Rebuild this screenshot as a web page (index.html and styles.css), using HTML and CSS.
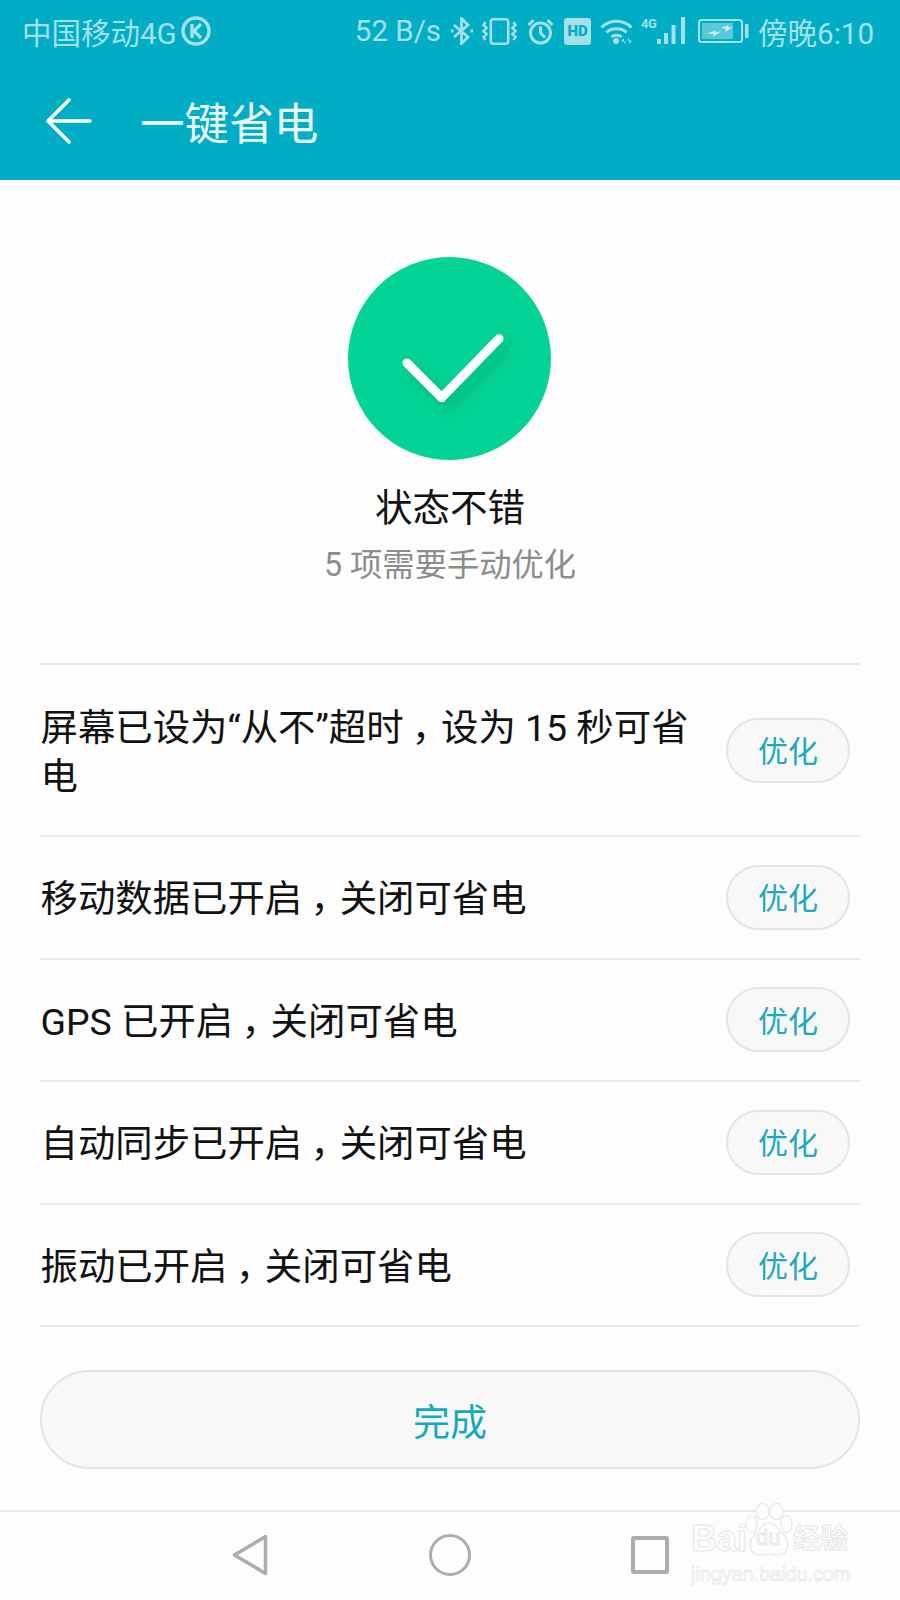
FILE: index.html
```html
<!DOCTYPE html>
<html lang="zh-CN">
<head>
  <meta charset="UTF-8">
  <meta name="viewport" content="width=device-width, initial-scale=1.0">
  <title>一键省电</title>
  <link rel="stylesheet" href="styles.css">
</head>
<body>
  <header class="app-header">
    <div class="status-bar">
      <div class="status-left">
        <span>中国移动4G</span>
        <svg class="icon-k" viewBox="0 0 30 30" fill="none" stroke="currentColor">
          <circle cx="15" cy="15" r="13" stroke-width="3.400"/>
          <path d="M11 8v14M20 8l-7 7 7 7" stroke-width="3.400"/>
        </svg>
      </div>
      <div class="status-right">
        <span class="speed">52 B/s</span>
        <svg class="icon-bt" viewBox="0 0 22 28" fill="none" stroke="currentColor" stroke-width="2.800">
          <path d="M3 8l14 12-6.500 6.500V1.500L17 8 3 20"/>
          <path d="M0 14h2.500M19.500 14H22"/>
        </svg>
        <svg class="icon-vibrate" viewBox="0 0 35 27" fill="none" stroke="currentColor" stroke-width="2.600">
          <rect x="8.800" y="1.300" width="17.400" height="24.400" rx="2.500"/>
          <path d="M3.500 4L1.500 7l3 3-3 3 3 3-3 3 2 3M31.500 4l2 3-3 3 3 3-3 3 3 3-2 3"/>
        </svg>
        <svg class="icon-alarm" viewBox="0 0 27 27" fill="none" stroke="currentColor" stroke-width="3">
          <circle cx="13.500" cy="15" r="10"/>
          <path d="M13.500 8.500V15l4.500 4.500M1.500 7l5-5M25.500 7l-5-5"/>
        </svg>
        <span class="hd-badge">HD</span>
        <svg class="icon-wifi" viewBox="0 0 33 26" fill="none" stroke="currentColor" stroke-width="3">
          <path d="M1.500 9.500c8-8.500 22-8.500 30 0M6.500 14.500c5-5 15-5 20 0M11.500 19c2.500-2.500 7.500-2.500 10 0"/>
          <circle cx="16" cy="23" r="3" fill="currentColor" stroke="none"/>
          <path d="M24 26v-6l-3 3.500h5zM29 20v6l3-3.500h-5z" fill="currentColor" stroke="none"/>
        </svg>
        <div class="signal">
          <span class="signal-4g">4G</span>
          <svg class="icon-bars" viewBox="0 0 30 28" fill="currentColor">
            <rect x="1" y="22" width="4" height="5"/>
            <rect x="8" y="16" width="4" height="11"/>
            <rect x="15.500" y="8" width="4" height="19"/>
            <rect x="25" y="0" width="4" height="27"/>
          </svg>
        </div>
        <svg class="icon-battery" viewBox="0 0 51 24">
          <rect x="1" y="1" width="43" height="22" rx="2.500" fill="none" stroke="currentColor" stroke-width="2"/>
          <rect x="4" y="4" width="31" height="16" fill="currentColor" opacity="0.550"/>
          <path d="M9 14.500l9-3-1 2 6-1-8 5 1-2.500zM23 9l8-3-1 2.500 5-.5-8 5 1-3z" fill="#d5f2f6"/>
          <rect x="47" y="5" width="3.500" height="14" rx="1" fill="currentColor"/>
        </svg>
        <span class="clock">傍晚6:10</span>
      </div>
    </div>
    <div class="toolbar">
      <svg class="icon-back" viewBox="0 0 46 46" fill="none" stroke="#fff" stroke-width="3.600" stroke-linecap="round" stroke-linejoin="round">
        <path d="M44 23H2M23 2L2 23l21 21"/>
      </svg>
      <h1 class="page-title">一键省电</h1>
    </div>
  </header>

  <main class="content">
    <section class="summary">
      <div class="status-circle">
        <svg class="check" viewBox="0 0 203 203" fill="none" stroke="#fff" stroke-width="9" stroke-linecap="round" stroke-linejoin="round">
          <path d="M59 106l34.700 34.700L151 81.700"/>
        </svg>
      </div>
      <div class="summary-title">状态不错</div>
      <div class="summary-sub">5 项需要手动优化</div>
    </section>

    <ul class="tip-list">
      <li class="tip tip-tall">
        <span class="tip-text">屏幕已设为“从不”超时<span class="comma">，</span>设为 15 秒可省<br>电</span>
        <button class="optimize-button">优化</button>
      </li>
      <li class="tip">
        <span class="tip-text">移动数据已开启<span class="comma">，</span>关闭可省电</span>
        <button class="optimize-button">优化</button>
      </li>
      <li class="tip">
        <span class="tip-text">GPS 已开启<span class="comma">，</span>关闭可省电</span>
        <button class="optimize-button">优化</button>
      </li>
      <li class="tip">
        <span class="tip-text">自动同步已开启<span class="comma">，</span>关闭可省电</span>
        <button class="optimize-button">优化</button>
      </li>
      <li class="tip">
        <span class="tip-text">振动已开启<span class="comma">，</span>关闭可省电</span>
        <button class="optimize-button">优化</button>
      </li>
    </ul>

    <button class="done-button">完成</button>
  </main>

  <nav class="nav-bar">
    <div class="nav-item">
      <svg class="nav-back" viewBox="0 0 36 42" fill="none" stroke="#acacac" stroke-width="3.500" stroke-linejoin="round">
        <path d="M33.500 2.500v37L2.500 21z"/>
      </svg>
    </div>
    <div class="nav-item"><span class="nav-home"></span></div>
    <div class="nav-item"><span class="nav-recent"></span></div>

    <div class="watermark">
      <div class="wm-top">
        <span class="wm-bai">Bai</span>
        <div class="wm-paw">
          <svg viewBox="0 0 48 53" fill="#fdfdfd" stroke="#e6e6e6" stroke-width="1.200">
            <ellipse cx="6.500" cy="21" rx="5.500" ry="8.500"/>
            <ellipse cx="17.500" cy="8.500" rx="6.500" ry="8"/>
            <ellipse cx="31.500" cy="8.500" rx="6.500" ry="8"/>
            <ellipse cx="41.500" cy="21" rx="5.500" ry="8.500"/>
            <path d="M24 20c-6 0-8 5-13 10-7 6-10 22 5 22 4 0 5-1 8-1s4 1 8 1c15 0 12-16 5-22-5-5-7-10-13-10z"/>
          </svg>
          <span class="wm-du">du</span>
        </div>
        <span class="wm-cn">经验</span>
      </div>
      <div class="wm-url">jingyan.baidu.com</div>
    </div>
  </nav>
</body>
</html>
```

FILE: styles.css
```css
* {
  box-sizing: border-box;
}
body {
  margin: 0;
  width: 900px;
  height: 1600px;
  overflow: hidden;
  display: flex;
  flex-direction: column;
  font-family: Roboto, "Noto Sans CJK SC", sans-serif;
  background-color: #fdfdfd;
  color: #111;
}
.app-header {
  height: 180px;
  background-color: #00adc5;
  flex: none;
}
.status-bar {
  height: 62px;
  padding: 0 26px 0 22px;
  display: flex;
  justify-content: space-between;
  align-items: center;
  color: #a3e0e9;
  font-size: 29.500px;
}
.status-left {
  display: flex;
  align-items: center;
  gap: 4px;
}
.icon-k {
  width: 30px;
  height: 30px;
}
.status-right {
  display: flex;
  align-items: center;
}
.icon-bt {
  width: 22px;
  height: 28px;
  margin-left: 10px;
}
.icon-vibrate {
  width: 35px;
  height: 27px;
  margin-left: 9px;
}
.icon-alarm {
  width: 27px;
  height: 27px;
  margin-left: 10px;
}
.hd-badge {
  width: 27px;
  height: 27px;
  margin-left: 10px;
  border-radius: 3px;
  background-color: #a3e0e9;
  color: #00adc5;
  font-size: 15px;
  font-weight: 900;
  line-height: 27px;
  text-align: center;
}
.icon-wifi {
  width: 33px;
  height: 26px;
  margin-left: 9px;
}
.signal {
  display: flex;
  align-items: flex-start;
  margin-left: 8px;
}
.signal-4g {
  font-size: 13px;
  font-weight: 700;
  letter-spacing: -0.5px;
  line-height: 14px;
  width: 15px;
}
.icon-bars {
  width: 30px;
  height: 28px;
}
.icon-battery {
  width: 51px;
  height: 24px;
  margin-left: 12px;
}
.clock {
  margin-left: 9px;
}
.toolbar {
  height: 118px;
  padding-left: 46px;
  display: flex;
  align-items: center;
}
.icon-back {
  width: 46px;
  height: 46px;
}
.page-title {
  margin: 0 0 2px 48px;
  font-size: 44.600px;
  font-weight: 400;
  color: #e9f8fa;
}
.content {
  flex: 1;
  padding: 0 40px;
}
.summary {
  padding-top: 77px;
  text-align: center;
}
.status-circle {
  width: 203px;
  height: 203px;
  margin-left: 308px;
  border-radius: 50%;
  background-color: #03d394;
}
.check {
  display: block;
  filter: drop-shadow(7px 8px 7px rgba(0, 110, 80, 0.28));
}
.summary-title {
  margin-top: 23px;
  font-size: 37.500px;
  line-height: 50px;
  color: #111;
}
.summary-sub {
  margin-top: 10px;
  font-size: 32.300px;
  line-height: 44px;
  color: #8c8c8c;
}
.tip-list {
  margin: 76px 0 0;
  padding: 0;
  list-style: none;
  border-bottom: 2px solid #e9e9e9;
}
.tip {
  height: 122.500px;
  padding-right: 10px;
  display: flex;
  align-items: center;
  gap: 19px;
  border-top: 2px solid #e9e9e9;
}
.tip-tall {
  height: 172px;
}
.tip-text {
  flex: 1;
  padding-left: 0.500px;
  padding-top: 5px;
  font-size: 37.400px;
  line-height: 49px;
  color: #111;
}
/* the source font centres the full-width comma in its cell */
.comma {
  padding-left: 0.220em;
  letter-spacing: -0.220em;
}
.optimize-button {
  flex: none;
  width: 124px;
  height: 65px;
  padding: 0 0 2px;
  border: 2px solid #e4e4e4;
  border-radius: 33px;
  background-color: #f8f8f8;
  color: #1fa8bd;
  font-family: inherit;
  font-size: 30px;
}
.done-button {
  display: block;
  width: 820px;
  height: 99px;
  margin-top: 43px;
  padding: 0;
  border: 2px solid #e4e4e4;
  border-radius: 50px;
  background-color: #f8f8f8;
  color: #12a9bf;
  font-family: inherit;
  font-size: 37px;
}
.nav-bar {
  position: relative;
  height: 90px;
  flex: none;
  display: flex;
  justify-content: center;
  align-items: center;
  padding-bottom: 2px;
  border-top: 2px solid #e9e9e9;
}
.nav-item {
  width: 200px;
  display: flex;
  justify-content: center;
}
.nav-back {
  width: 36px;
  height: 42px;
}
.nav-home {
  width: 42px;
  height: 42px;
  border: 3.500px solid #acacac;
  border-radius: 50%;
}
.nav-recent {
  width: 38px;
  height: 38px;
  border: 4px solid #acacac;
  border-radius: 3px;
}
/* baidu watermark sits over the nav bar */
.watermark {
  position: absolute;
  left: 691px;
  top: -9px;
  width: 165px;
  color: #fdfdfd;
  -webkit-text-stroke: 1px #e6e6e6;
}
.wm-top {
  display: flex;
  align-items: flex-end;
  height: 53px;
}
.wm-bai {
  font-family: "Liberation Sans", sans-serif;
  font-size: 36px;
  line-height: 36px;
  font-weight: 700;
  width: 54px;
  flex: none;
  margin-bottom: -1px;
}
.wm-paw {
  position: relative;
  width: 48px;
  height: 53px;
  flex: none;
}
.wm-paw svg {
  display: block;
  width: 48px;
  height: 53px;
}
.wm-du {
  position: absolute;
  left: 11px;
  bottom: 6px;
  font-family: "Liberation Sans", sans-serif;
  font-size: 22px;
  line-height: 24px;
}
.wm-cn {
  font-size: 27.500px;
  line-height: 34px;
  font-weight: 700;
  white-space: nowrap;
}
.wm-url {
  margin-top: 8px;
  font-family: "Liberation Sans", sans-serif;
  font-size: 19.800px;
  line-height: 20px;
  white-space: nowrap;
  -webkit-text-stroke: 0.7px #e6e6e6;
}
```
